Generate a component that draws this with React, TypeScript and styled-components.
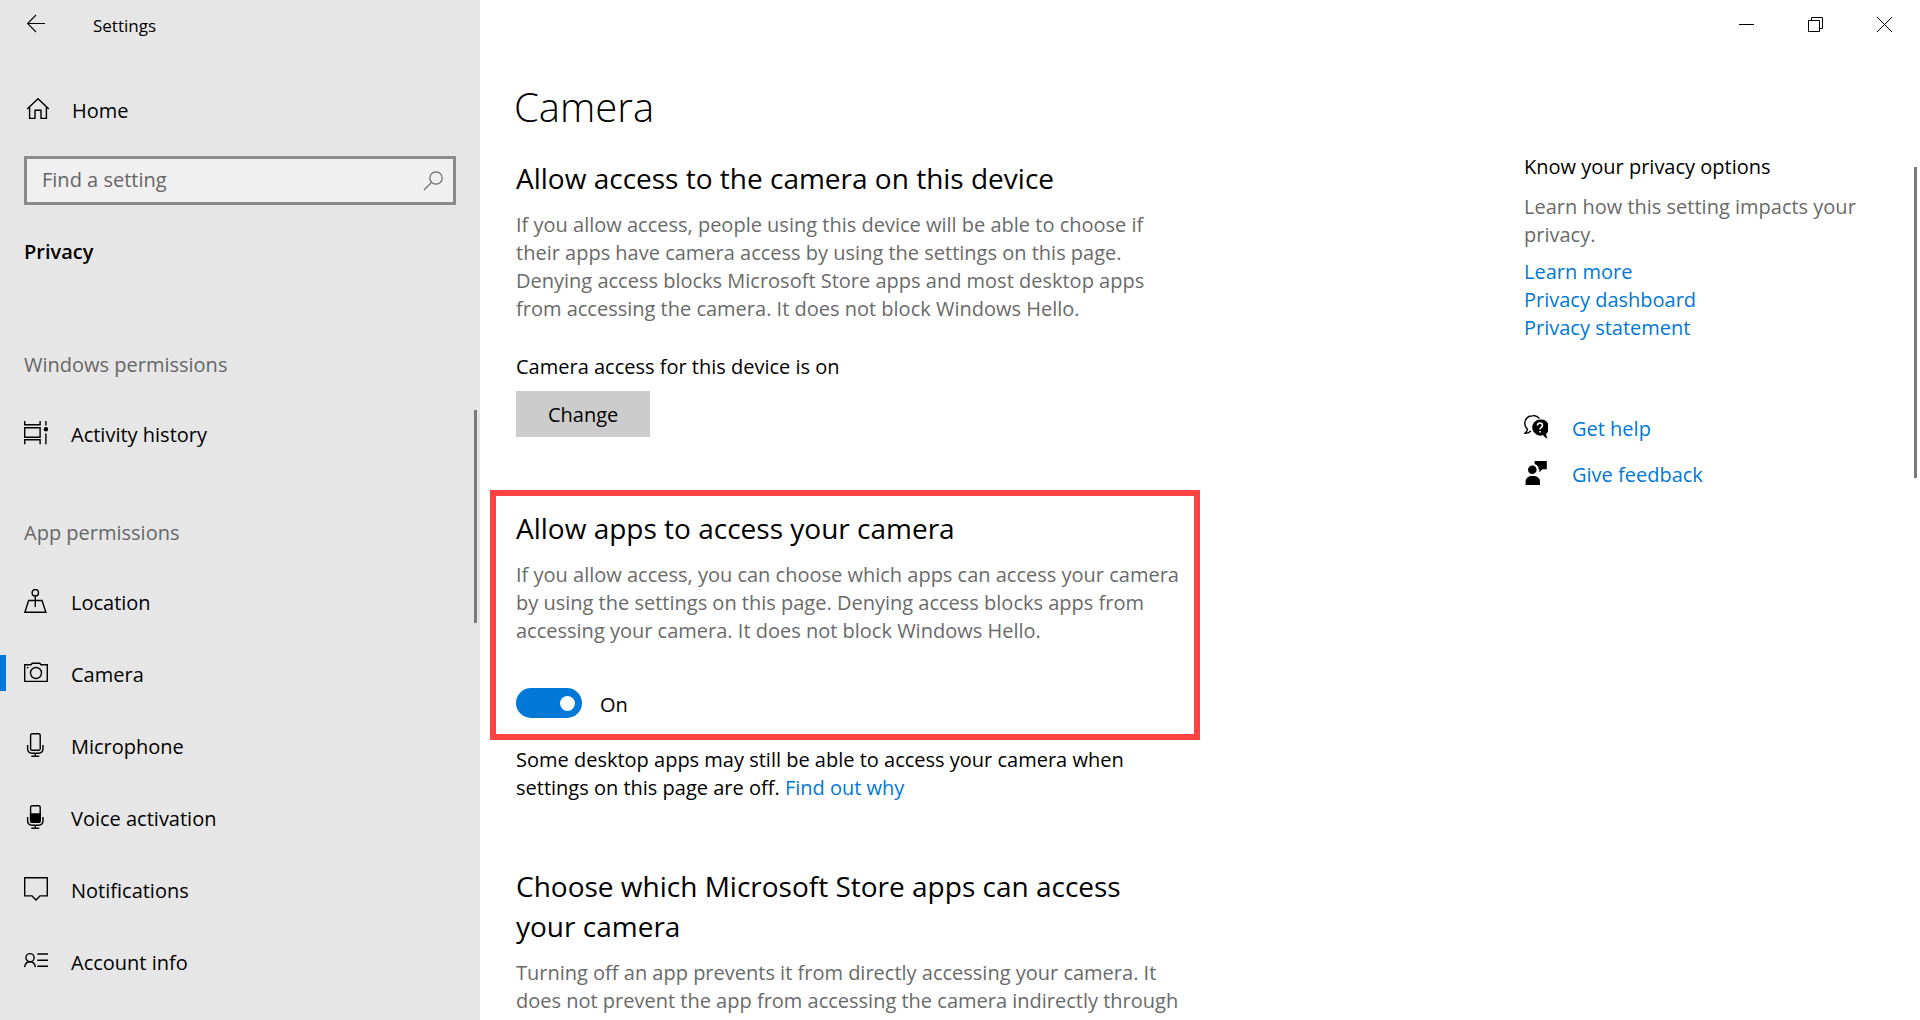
import React, { useState } from "react";
import styled, { createGlobalStyle } from "styled-components";

const GlobalStyle = createGlobalStyle`
  *, *::before, *::after { box-sizing: border-box; }
  body {
    margin: 0;
    background: #ffffff;
    color: #000000;
    font-family: "Segoe UI", "Open Sans", "Noto Sans", sans-serif;
    font-size: 20px;
    line-height: 28px;
  }
  h1, h2, h3, p, ul { margin: 0; padding: 0; }
  button, input { font: inherit; color: inherit; }
`;

const Window = styled.div`
  display: flex;
  height: 100vh;
  overflow: hidden;
`;

const Sidebar = styled.aside`
  position: relative;
  flex: 0 0 480px;
  background: #e6e6e6;
`;

const SidebarBar = styled.div`
  display: flex;
  align-items: center;
  height: 48px;
  padding-left: 24px;
  gap: 45px;
  font-size: 17px;
`;

const BackButton = styled.button`
  display: flex;
  border: 0;
  padding: 0;
  background: none;
`;

const HomeLink = styled.a`
  display: flex;
  align-items: center;
  gap: 22px;
  height: 48px;
  margin: 37px 24px 23px 26px;
  color: inherit;
  text-decoration: none;
`;

const SearchBox = styled.label`
  display: flex;
  align-items: center;
  height: 49px;
  margin: 0 24px 33px;
  padding: 0 8px 0 15px;
  border: 3px solid #8a8a8a;
  background: #f0f0f0;
  color: #666666;
`;

const SearchInput = styled.input`
  flex: 1;
  min-width: 0;
  height: 30px;
  padding: 0 0 2px;
  border: 0;
  outline: 0;
  background: transparent;
  &::placeholder { color: #666666; opacity: 1; }
`;

const SidebarTitle = styled.h2`
  padding: 0 24px;
  font-size: 20px;
  font-weight: 600;
  line-height: 28px;
  margin-bottom: 35px;
`;

const GroupTitle = styled.h3`
  padding: 50px 24px 18px;
  font-size: 20px;
  font-weight: 400;
  line-height: 28px;
  color: #666666;
`;

const NavList = styled.ul`
  list-style: none;
`;

const NavLink = styled.a<{ $active?: boolean }>`
  display: flex;
  align-items: center;
  height: 72px;
  color: inherit;
  text-decoration: none;
  &::before {
    content: "";
    width: 6px;
    height: 36px;
    margin-right: 18px;
    background: ${(p) => (p.$active ? "#0078d7" : "transparent")};
  }
  svg { margin-right: 23px; }
`;

const Label = styled.span`
  padding-top: 3px;
`;

const ScrollThumb = styled.div<{ $top: number; $length: number }>`
  position: absolute;
  right: 3px;
  top: ${(p) => p.$top}px;
  width: 3px;
  height: ${(p) => p.$length}px;
  background: #7a7a7a;
`;

const Main = styled.main`
  position: relative;
  flex: 1;
  min-width: 0;
`;

const Caption = styled.div`
  display: flex;
  justify-content: flex-end;
  height: 48px;
  padding-right: 1px;
`;

const CaptionButton = styled.button`
  display: flex;
  align-items: center;
  justify-content: center;
  width: 69px;
  border: 0;
  padding: 0;
  background: none;
`;

const Page = styled.div`
  display: flex;
  justify-content: space-between;
  padding: 31px 36px 0 10px;
`;

const Content = styled.div`
  flex: 0 1 710px;
`;

const Section = styled.section`
  padding: 0 12px 0 26px;
`;

const Highlight = styled.section`
  margin: 53px 0 6px;
  padding: 12px 12px 16px 20px;
  border: 6px solid #ff4242;
`;

const PageTitle = styled.h1`
  padding: 0 24px;
  font-size: 40px;
  font-weight: 300;
  line-height: 56px;
  margin-bottom: 23px;
`;

const Heading = styled.h2`
  font-size: 28px;
  font-weight: 400;
  line-height: 40px;
  margin-bottom: 13px;
`;

const Text = styled.p<{ $muted?: boolean }>`
  color: ${(p) => (p.$muted ? "#6a6a6a" : "inherit")};
`;

const Status = styled.p`
  margin: 30px 0 10px;
`;

const ChangeButton = styled.button`
  height: 46px;
  padding: 2px 32px 0;
  border: 0;
  background: #cccccc;
`;

const ToggleLabel = styled.label`
  display: flex;
  align-items: center;
  gap: 18px;
  margin-top: 43px;
  height: 30px;
`;

const Switch = styled.input`
  appearance: none;
  display: flex;
  align-items: center;
  justify-content: flex-end;
  width: 66px;
  height: 30px;
  margin: 0;
  padding: 0 7px;
  border-radius: 15px;
  background: #0078d7;
  &::after {
    content: "";
    width: 15px;
    height: 15px;
    border-radius: 50%;
    background: #ffffff;
  }
  &:not(:checked) { background: #8a8a8a; justify-content: flex-start; }
`;

const Link = styled.a`
  color: #0078d7;
  text-decoration: none;
`;

const StoreSection = styled(Section)`
  margin-top: 64px;
`;

const Related = styled.aside`
  flex: 0 0 360px;
  padding-top: 74px;
`;

const RelatedTitle = styled.h3`
  font-size: 20px;
  font-weight: 400;
  line-height: 28px;
  margin-bottom: 12px;
`;

const RelatedLinks = styled.div`
  display: flex;
  flex-direction: column;
  align-items: flex-start;
  margin: 9px 0 71px;
`;

const HelpLinks = styled.div`
  display: flex;
  flex-direction: column;
  gap: 18px;
`;

const HelpRow = styled.div`
  display: flex;
  align-items: center;
  gap: 24px;
  height: 28px;
`;

const Icon = ({ children }: { children: React.ReactNode }) => (
  <svg width="24" height="24" viewBox="0 0 24 24" fill="none" stroke="currentColor" strokeWidth="1.4" aria-hidden="true">
    {children}
  </svg>
);

const micStand = <path d="M3.6 12v3.5q0 4.7 4.5 4.7h6.4q4.5 0 4.5-4.7V12M11.3 20.2v3M7.3 23.2h8" />;

const icons = {
  back: <path d="M21 11.5H3.5M12 3l-8.4 8.5L12 20" strokeWidth="1.1" />,
  home: <path d="M1.2 12 12 1.8 22.8 12M3.6 9.8v11.6H9v-8.2h6v8.2h5.4V9.8" />,
  search: (
    <g strokeWidth="1.2">
      <circle cx="15" cy="9" r="6.2" />
      <path d="M10.6 13.4 3 21" />
    </g>
  ),
  activity: (
    <>
      <path d="M.7 0v3.8h15.4V0M.7 6.8h15.4v9.4H.7zM.7 23.2v-4.5h15.4v4.5M21.9 0v4.4M21.9 12.4v10.8" />
      <circle cx="21.9" cy="8.3" r="2.2" fill="currentColor" stroke="none" />
    </>
  ),
  location: (
    <>
      <circle cx="11.3" cy="3.7" r="3.2" />
      <path d="M11.3 6.9v11M8 11.5H4.6L.9 23.2h21L18 11.5h-3.4M8 11.5h6.6" />
    </>
  ),
  camera: (
    <>
      <path d="M.7 3.7H7l1.2-1.5h7.6L17 3.7h6.3v16.7H.7z" />
      <circle cx="12" cy="12" r="5.5" />
      <path d="M2.8 6.6h1.6" />
    </>
  ),
  microphone: (
    <>
      <rect x="6.6" y=".7" width="9.6" height="16.6" rx="1.6" />
      {micStand}
    </>
  ),
  voice: (
    <>
      <rect x="6.6" y=".7" width="9.6" height="16.6" rx="1.6" />
      <path d="M6.6 9h9.6v6.7q0 1.6-1.6 1.6H8.2q-1.6 0-1.6-1.6z" fill="currentColor" />
      {micStand}
    </>
  ),
  notifications: <path d="M.7.7h22.6v18.2H16l-4 4-4-4H.7z" />,
  account: (
    <>
      <circle cx="6" cy="8.7" r="4.1" />
      <path d="M.6 18.2q.8-5.4 5.4-5.4t5.4 5.4M13.3 5H24M13.3 11.3H24M13.3 17.2H24" />
    </>
  ),
  help: (
    <>
      <path d="M15.4 3.6A7.6 7.6 0 0 0 8.4.7C4.2.7.7 4 .7 8.2c0 2.6 1.2 4.6 2.8 6-.2 1.7-1 3-2.6 4.2 2.6 0 4.4-.8 6-2.4" />
      <path d="M16 4.6a8 8 0 1 0 3 15.5c1.2 1.7 2.600 2.800 4.900 3.500-1.200-1.500-1.700-3-1.700-4.900A8 8 0 0 0 16 4.600z" fill="currentColor" stroke="none" />
      <path d="M13.500 10.400c0-3.200 5-3.200 5 0 0 2-2.500 1.900-2.500 4.200M16 15.900v1.600" stroke="#ffffff" strokeWidth="1.600" />
    </>
  ),
  feedback: (
    <g fill="currentColor" stroke="none">
      <circle cx="8.3" cy="8.8" r="4.3" />
      <path d="M1.6 24v-3.5C1.6 17 4.500 15 8.800 15s7.200 2 7.200 5.500V24z" />
      <path d="M10.600 0h12.200v8.200h-4.300l-3.100 3V8.200h-.8c0-2.600-1.600-4.600-4-5.200z" />
    </g>
  ),
};

const appPermissions: { label: string; icon: React.ReactNode; active?: boolean }[] = [
  { label: "Location", icon: icons.location },
  { label: "Camera", icon: icons.camera, active: true },
  { label: "Microphone", icon: icons.microphone },
  { label: "Voice activation", icon: icons.voice },
  { label: "Notifications", icon: icons.notifications },
  { label: "Account info", icon: icons.account },
];

export default function App() {
  const [allowed, setAllowed] = useState(true);

  return (
    <>
      <GlobalStyle />
      <Window>
        <Sidebar>
          <SidebarBar>
            <BackButton aria-label="Back"><Icon>{icons.back}</Icon></BackButton>
            <Label>Settings</Label>
          </SidebarBar>
          <HomeLink href="#home"><Icon>{icons.home}</Icon><Label>Home</Label></HomeLink>
          <SearchBox>
            <SearchInput type="text" placeholder="Find a setting" aria-label="Find a setting" />
            <Icon>{icons.search}</Icon>
          </SearchBox>
          <SidebarTitle>Privacy</SidebarTitle>
          <nav>
            <GroupTitle>Windows permissions</GroupTitle>
            <NavList>
              <li>
                <NavLink href="#activity"><Icon>{icons.activity}</Icon><Label>Activity history</Label></NavLink>
              </li>
            </NavList>
            <GroupTitle>App permissions</GroupTitle>
            <NavList>
              {appPermissions.map((item) => (
                <li key={item.label}>
                  <NavLink href="#permission" $active={item.active}>
                    <Icon>{item.icon}</Icon>
                    <Label>{item.label}</Label>
                  </NavLink>
                </li>
              ))}
            </NavList>
          </nav>
          <ScrollThumb $top={410} $length={213} />
        </Sidebar>

        <Main>
          <Caption>
            <CaptionButton aria-label="Minimize">
              <svg width="15" height="15" viewBox="0 0 15 15" stroke="#000"><path d="M0 7.5h15" /></svg>
            </CaptionButton>
            <CaptionButton aria-label="Restore">
              <svg width="15" height="15" viewBox="0 0 15 15" stroke="#000" fill="none">
                <path d="M.5 3.5h11v11H.5zM3.5 3.5v-3h11v11h-3" />
              </svg>
            </CaptionButton>
            <CaptionButton aria-label="Close">
              <svg width="15" height="15" viewBox="0 0 15 15" stroke="#000"><path d="m0 0 15 15M15 0 0 15" /></svg>
            </CaptionButton>
          </Caption>
          <Page>
            <Content>
              <PageTitle>Camera</PageTitle>
              <Section>
                <Heading>Allow access to the camera on this device</Heading>
                <Text $muted>
                  If you allow access, people using this device will be able to choose if
                  <br />their apps have camera access by using the settings on this page.
                  <br />Denying access blocks Microsoft Store apps and most desktop apps
                  <br />from accessing the camera. It does not block Windows Hello.
                </Text>
                <Status>Camera access for this device is on</Status>
                <ChangeButton>Change</ChangeButton>
              </Section>
              <Highlight>
                <Heading>Allow apps to access your camera</Heading>
                <Text $muted>
                  If you allow access, you can choose which apps can access your camera
                  <br />by using the settings on this page. Denying access blocks apps from
                  <br />accessing your camera. It does not block Windows Hello.
                </Text>
                <ToggleLabel>
                  <Switch type="checkbox" role="switch" checked={allowed} onChange={() => setAllowed(!allowed)} />
                  <Label>{allowed ? "On" : "Off"}</Label>
                </ToggleLabel>
              </Highlight>
              <Section>
                <Text>
                  Some desktop apps may still be able to access your camera when
                  <br />settings on this page are off. <Link href="#why">Find out why</Link>
                </Text>
              </Section>
              <StoreSection>
                <Heading>Choose which Microsoft Store apps can access<br />your camera</Heading>
                <Text $muted>
                  Turning off an app prevents it from directly accessing your camera. It
                  <br />does not prevent the app from accessing the camera indirectly through
                </Text>
              </StoreSection>
            </Content>
            <Related>
              <RelatedTitle>Know your privacy options</RelatedTitle>
              <Text $muted>Learn how this setting impacts your<br />privacy.</Text>
              <RelatedLinks>
                <Link href="#learn">Learn more</Link>
                <Link href="#dashboard">Privacy dashboard</Link>
                <Link href="#statement">Privacy statement</Link>
              </RelatedLinks>
              <HelpLinks>
                <HelpRow><Icon>{icons.help}</Icon><Label><Link href="#help">Get help</Link></Label></HelpRow>
                <HelpRow><Icon>{icons.feedback}</Icon><Label><Link href="#feedback">Give feedback</Link></Label></HelpRow>
              </HelpLinks>
            </Related>
          </Page>
          <ScrollThumb $top={167} $length={311} />
        </Main>
      </Window>
    </>
  );
}
